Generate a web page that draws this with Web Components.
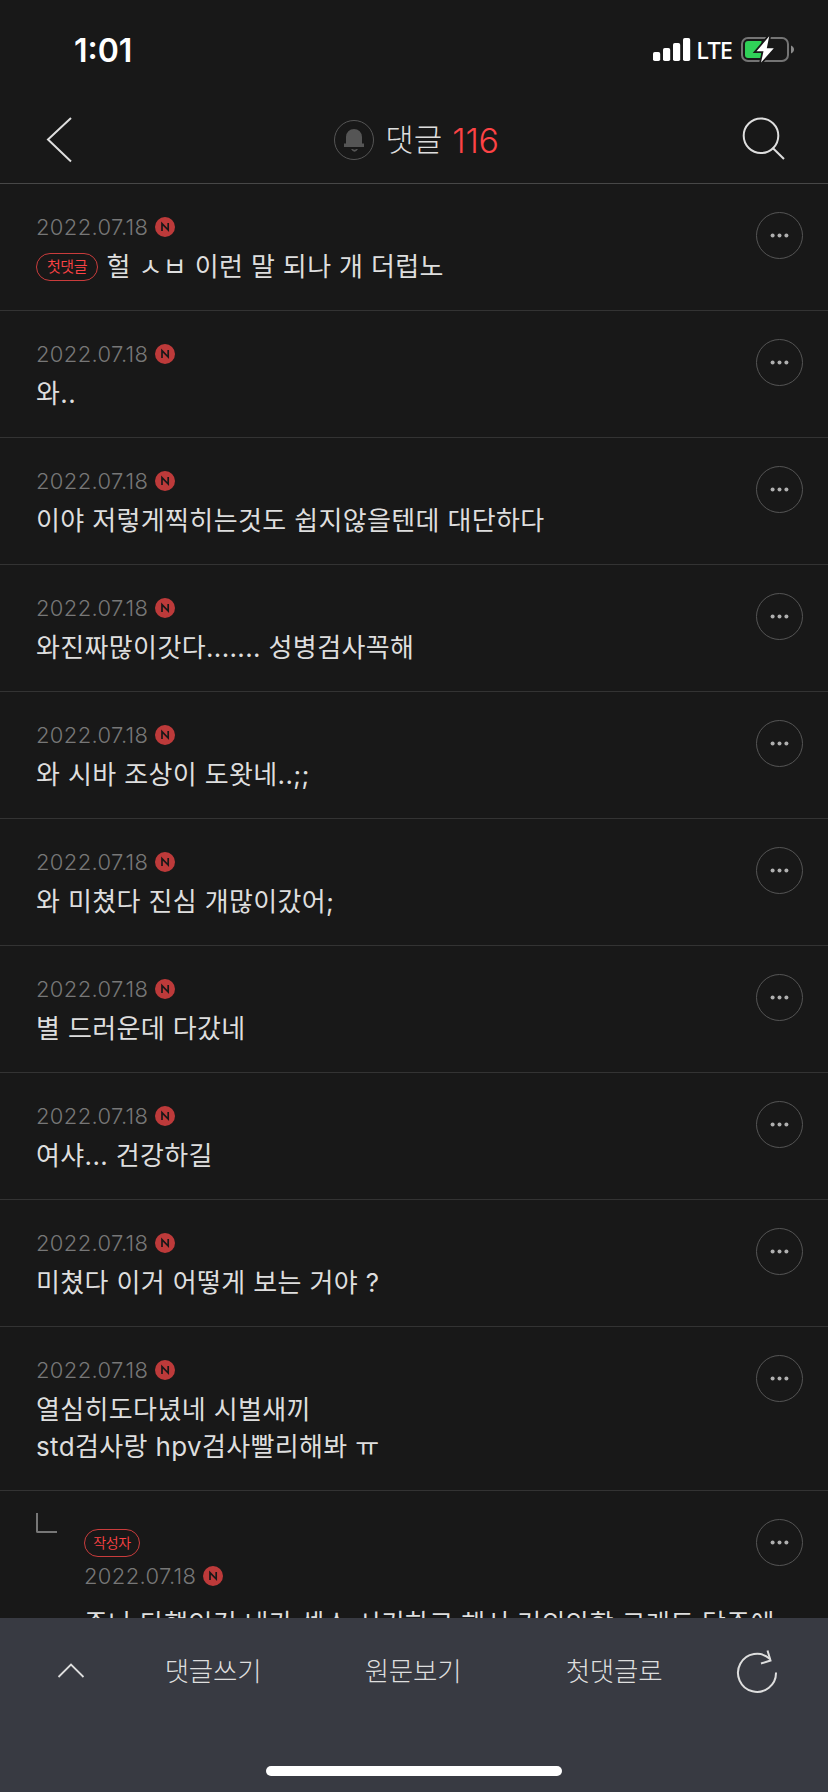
<!DOCTYPE html>
<html lang="ko">
<head>
<meta charset="utf-8">
<title>댓글</title>
<style>
html,body{margin:0;height:100%;overflow:hidden;background:#181818}
body{font-family:Inter,"Noto Sans CJK KR",sans-serif;color:#dedede;width:828px;height:1792px}
</style>
</head>
<body>
<comment-app></comment-app>
<script>
const define = (name, html) => {
  const t = document.createElement('template');
  t.innerHTML = html;
  customElements.define(name, class extends HTMLElement {
    constructor() {
      super();
      this.attachShadow({mode: 'open'}).append(t.content.cloneNode(true));
    }
  });
};

define('status-bar', `
<style>
:host{display:flex;height:98px;box-sizing:border-box;padding:0 33px 0 74px;align-items:center;justify-content:space-between;color:#fff}
.time{font-size:32px;font-weight:600;line-height:40px;letter-spacing:0;padding-top:3px}
.right{display:flex;align-items:center;height:40px;padding-top:2px}
.lte{font-family:"Noto Sans",sans-serif;font-size:23.500px;font-weight:500;line-height:30px;margin:0 9px 0 5px;letter-spacing:-.9px;padding-bottom:1px}
svg{display:block}
</style>
<div class="time">1:01</div>
<div class="right">
<svg width="38" height="24" viewBox="0 0 38 24" fill="#fff"><rect x="0" y="14" width="7.200" height="9" rx="1.800"/><rect x="10" y="10" width="7.200" height="13" rx="1.800"/><rect x="20" y="5" width="7.200" height="18" rx="1.800"/><rect x="30" y="0" width="7.200" height="23" rx="1.800"/></svg>
<div class="lte">LTE</div>
<svg width="54" height="28" viewBox="0 0 54 28"><rect x="1" y="2" width="46" height="23" rx="6" fill="none" stroke="#747474" stroke-width="2"/><path d="M50 9.500c4 1.500 4 6.500 0 8z" fill="#8a8a8a"/><path d="M7 5H20.500V22H7a3 3 0 0 1-3-3V8a3 3 0 0 1 3-3z" fill="#30d158"/><path d="M28.200 .3L15.500 15.300h7L20 26.500 32.800 12.200h-7z" fill="#fff" stroke="#181818" stroke-width="3.500" paint-order="stroke"/></svg>
</div>`);

define('page-header', `
<style>
:host{display:flex;height:86px;box-sizing:border-box;border-bottom:1px solid #474747;padding:0 43px 1px 45px;align-items:center;justify-content:space-between}
svg{display:block;overflow:visible}
.title{display:flex;align-items:center;font-size:31px;font-weight:300;line-height:44px;color:#dedede;margin-left:19px}
.title span{margin-left:11px}
.title b{font-weight:300;color:#fd4345;margin-left:10px;font-size:34px;letter-spacing:-.3px;padding-top:1px}
</style>
<svg width="28" height="46" viewBox="0 0 28 46" fill="none" stroke="#dedede" stroke-width="2"><path d="M26 1L3 22.500 26 44.500"/></svg>
<div class="title">
<svg width="40" height="40" viewBox="0 0 40 40"><circle cx="20" cy="20" r="19.500" fill="none" stroke="#555"/><path d="M10 27v-3.500h2V17a8 8 0 0 1 16 0v6.500h2V27z" fill="#555"/><path d="M17 29h1.500q2 1.500 4 0H24q-3.500 5.500-7 0z" fill="#555"/></svg>
<span>댓글</span><b>116</b></div>
<svg width="44" height="44" viewBox="0 0 44 44" fill="none" stroke="#dedede" stroke-width="2"><circle cx="20" cy="17.700" r="17.300"/><path d="M31.500 29.700L43 41"/></svg>`);

define('pill-tag', `
<style>
:host{display:inline-flex;box-sizing:border-box;width:62px;height:28px;border:1px solid #c93c3c;border-radius:14px;align-items:center;justify-content:center;font-size:15px;font-weight:350;line-height:26px;letter-spacing:-.4px;color:#fd4345;white-space:nowrap}
</style><slot></slot>`);

define('post-date', `
<style>
:host{display:flex;align-items:center;height:26px;font-size:22px;font-weight:300;color:#777;line-height:26px;letter-spacing:.35px}
svg{display:block;margin-left:6.500px}
</style><slot></slot>
<svg width="20" height="20" viewBox="0 0 20 20"><circle cx="10" cy="10" r="10" fill="#bd3a3a"/><path d="M7 14V6.600L13.200 13V6" fill="none" stroke="#181818" stroke-width="1.700"/></svg>`);

define('more-button', `
<style>:host,svg{display:block}</style>
<svg width="47" height="47" viewBox="0 0 47 47"><circle cx="23.500" cy="23.500" r="23" fill="none" stroke="#555"/><g fill="#b0b0b0"><circle cx="16.600" cy="23.500" r="2"/><circle cx="23.500" cy="23.500" r="2"/><circle cx="30.400" cy="23.500" r="2"/></g></svg>`);

define('comment-row', `
<style>
:host{display:flex;align-items:flex-start;box-sizing:border-box;border-bottom:1px solid #333;padding:28px 25px 25px 36px}
.main{flex:1;min-width:0;padding-top:2px}
.text{display:flex;align-items:center;font-size:26px;line-height:37px;margin-top:8px;white-space:pre;letter-spacing:.36px}
::slotted(pill-tag){margin-right:8.500px}
</style>
<div class="main"><post-date>2022.07.18</post-date><div class="text"><slot name="tag"></slot><slot></slot></div></div><more-button></more-button>`);

define('reply-row', `
<style>
:host{display:flex;align-items:flex-start;padding:28px 25px 26px 36px}
.corner{width:19px;height:18px;border:solid #777;border-width:0 0 2px 2px;border-radius:0 0 0 2px;margin-top:-6px}
.main{flex:1;min-width:0;padding:10px 0 0 27px}
::slotted(pill-tag){width:56px;font-size:14px}
post-date{margin-top:6px}
.text{font-size:26px;line-height:37px;margin-top:16px;white-space:pre;letter-spacing:.3px;margin-right:-47px}
</style>
<div class="corner"></div>
<div class="main"><slot name="tag"></slot><post-date>2022.07.18</post-date><div class="text"><slot></slot></div></div><more-button></more-button>`);

define('bottom-bar', `
<style>
:host{display:flex;flex-direction:column;align-items:center;height:174px;background:#383a42}
nav{display:grid;grid-template-columns:142px 142px 258px 144px 142px;width:828px;height:106px;align-items:center;justify-items:center;font-size:26.500px;font-weight:300;line-height:40px;letter-spacing:-.2px;color:#dedede}
nav span{white-space:nowrap}
svg{display:block}
.home{width:296px;height:10px;border-radius:5px;background:#fff;margin-top:42px}
</style>
<nav>
<svg width="28" height="16" viewBox="0 0 28 16" fill="none" stroke="#dedede" stroke-width="1.800"><path d="M1.500 14L14 1.500 26.500 14"/></svg>
<span>댓글쓰기</span><span>원문보기</span><span>첫댓글로</span>
<svg width="42" height="44" viewBox="0 0 42 44" fill="none" stroke="#dedede" stroke-width="2"><path d="M40 23.500A19 19 0 1 1 34 10"/><path d="M31.500 1.500L34.500 11.500 25 14.500"/></svg>
</nav><div class="home"></div>`);

define('comment-app', `
<style>
:host{display:flex;flex-direction:column;width:828px;height:1792px;overflow:hidden;background:#181818}
main{flex:1;min-height:0;overflow:hidden}
status-bar,page-header,bottom-bar{flex:none}
</style>
<status-bar></status-bar>
<page-header></page-header>
<main>
<comment-row><pill-tag slot="tag">첫댓글</pill-tag>헐 ㅅㅂ 이런 말 되나 개 더럽노</comment-row>
<comment-row>와..</comment-row>
<comment-row>이야 저렇게찍히는것도 쉽지않을텐데 대단하다</comment-row>
<comment-row>와진짜많이갓다....... 성병검사꼭해</comment-row>
<comment-row>와 시바 조상이 도왓네..;;</comment-row>
<comment-row>와 미쳤다 진심 개많이갔어;</comment-row>
<comment-row>별 드러운데 다갔네</comment-row>
<comment-row>여샤... 건강하길</comment-row>
<comment-row>미쳤다 이거 어떻게 보는 거야 ?</comment-row>
<comment-row>열심히도다녔네 시벌새끼
std검사랑 hpv검사빨리해봐 ㅠ</comment-row>
<reply-row><pill-tag slot="tag">작성자</pill-tag>존나 다행인건 내가 섹스 시키하고 해서 거의안함 그래도 담주에</reply-row>
</main>
<bottom-bar></bottom-bar>`);
</script>
</body>
</html>
